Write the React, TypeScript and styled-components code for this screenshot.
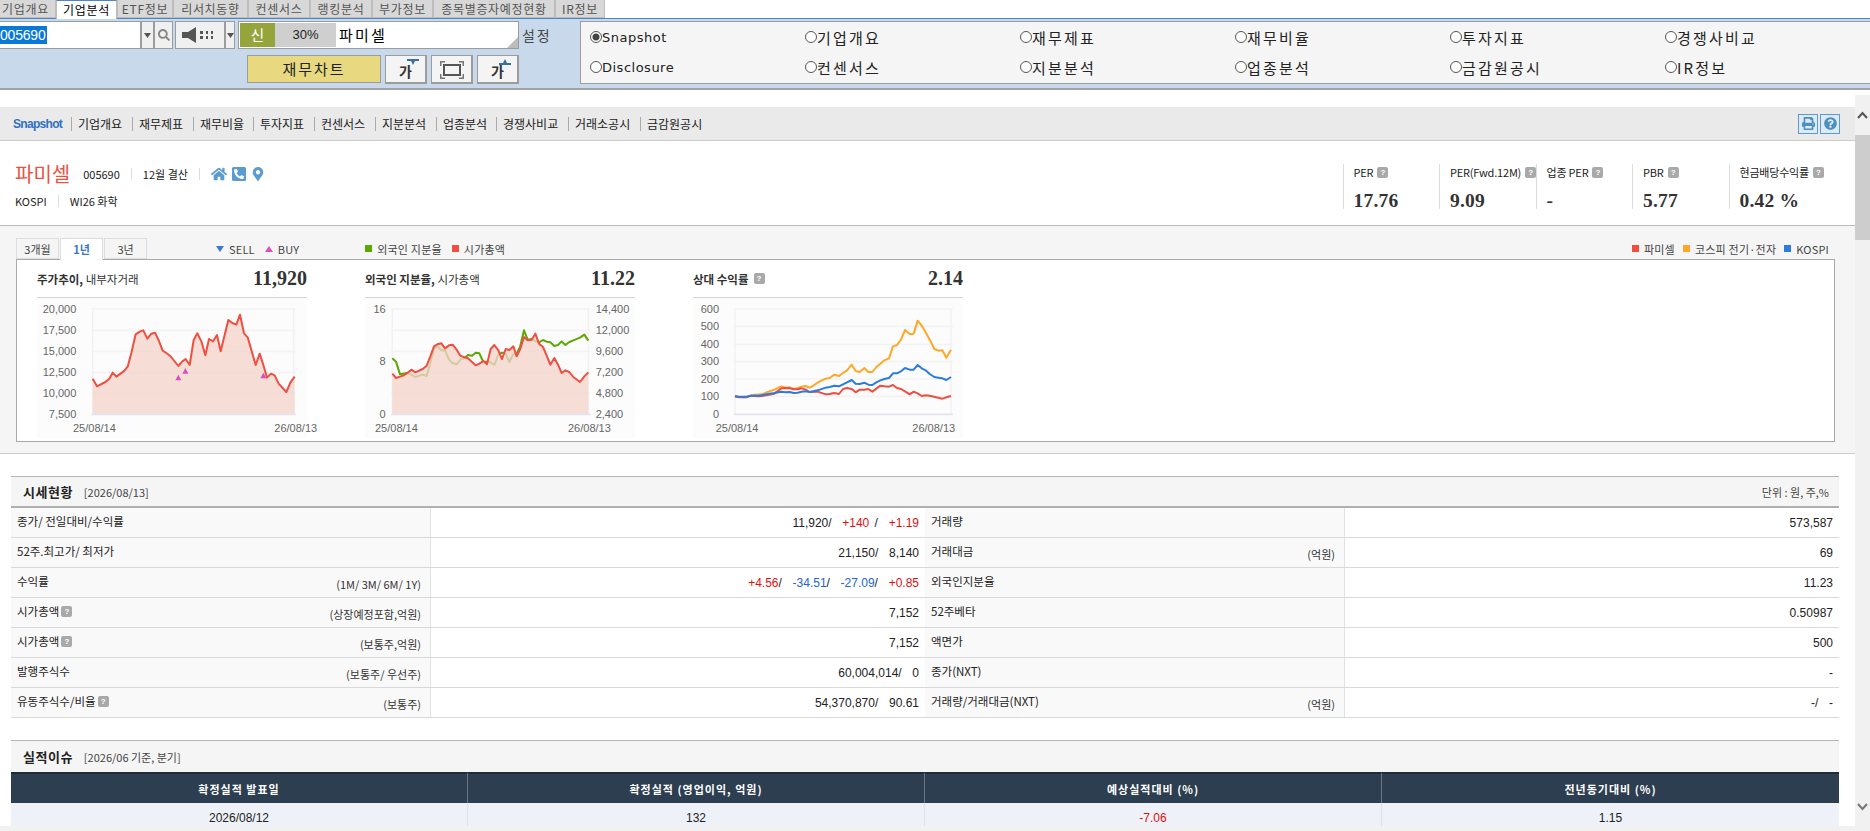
import React from "react";
import styled, { createGlobalStyle } from "styled-components";
import { FaHome, FaMapMarkerAlt, FaPhoneSquareAlt, FaPrint, FaQuestionCircle, FaSearch } from "react-icons/fa";

const FONT = `"Liberation Sans", "Noto Sans CJK KR", sans-serif`;
const KR = `"Noto Sans CJK KR", "Liberation Sans", sans-serif`;

const GlobalStyle = createGlobalStyle`
  html, body { margin: 0; padding: 0; background: #fff; overflow: hidden; }
  * { box-sizing: border-box; }
`;

const Root = styled.div`
  width: 1870px;
  height: 831px;
  display: flex;
  flex-direction: column;
  overflow: hidden;
  font-family: ${FONT};
  font-size: 12px;
  color: #333;
`;

/* top tabs */
const TabBar = styled.div`
  display: flex;
  height: 19px;
  border-bottom: 1px solid #4a86c5;
  margin-left: -5px;
  flex: none;
`;
const Tab = styled.div<{ $w: number; $active?: boolean }>`
  width: ${(p) => p.$w}px;
  height: ${(p) => (p.$active ? 19 : 18)}px;
  background: ${(p) => (p.$active ? "#fff" : "#d8d8d8")};
  border: 1px solid #bdbdbd;
  border-bottom: ${(p) => (p.$active ? "none" : "1px solid #bdbdbd")};
  border-top: ${(p) => (p.$active ? "1px solid #4a86c5" : "none")};
  font: 12px/17px ${KR};
  letter-spacing: 0.7px;
  text-align: center;
  color: ${(p) => (p.$active ? "#000" : "#555")};
  white-space: nowrap;
`;

/* toolbar */
const Toolbar = styled.div`
  flex: none;
  height: 71px;
  display: flex;
  background: #c9d9ec;
  border-bottom: 2px solid #a3a3a3;
  padding: 2px 2px 0 0;
`;
const ToolLeft = styled.div`
  width: 580px;
  flex: none;
`;
const ToolRow = styled.div`
  display: flex;
  align-items: center;
  height: 28px;
`;
const ToolRowEnd = styled(ToolRow)`
  margin-top: 6px;
  padding-left: 247px;
  gap: 4px;
`;
const CodeInput = styled.div`
  width: 141px;
  height: 28px;
  background: #fff;
  border: 1px solid #9c9c9c;
  border-left: none;
  display: flex;
  align-items: center;
  font: 14px ${FONT};
  letter-spacing: -0.2px;
`;
const Selected = styled.span`
  background: #0a78d7;
  color: #fff;
  line-height: 18px;
  padding-right: 1px;
`;
const SmallBtn = styled.div<{ $w: number; $ml?: number }>`
  width: ${(p) => p.$w}px;
  margin-left: ${(p) => p.$ml ?? 0}px;
  height: 28px;
  flex: none;
  background: #f0f0f0;
  border: 1px solid #9c9c9c;
  display: flex;
  align-items: center;
  justify-content: center;
  color: #555;
`;
const NameField = styled.div`
  position: relative;
  width: 281px;
  height: 28px;
  margin-left: 3px;
  flex: none;
  background: #fff;
  border: 1px solid #9c9c9c;
  display: flex;
  padding: 1px;
`;
const ShinTag = styled.div`
  width: 35px;
  background: #95a43b;
  color: #fff;
  font: 15px/24px ${KR};
  text-align: center;
`;
const RateTag = styled.div`
  width: 61px;
  background: #cfcfcf;
  font: 13px/24px ${FONT};
  text-align: center;
  color: #222;
`;
const StockName = styled.div`
  margin-left: 3px;
  font: 15px/24px ${KR};
  letter-spacing: 2.2px;
  color: #000;
`;
const Corner = styled.span`
  position: absolute;
  right: 0;
  bottom: 0;
  border-style: solid;
  border-width: 0 0 11px 11px;
  border-color: transparent transparent #bcbcbc transparent;
`;
const SettingLabel = styled.div`
  margin-left: 3px;
  font: 14px ${KR};
  letter-spacing: 1.8px;
  color: #444;
`;
const ChartBtn = styled.div`
  width: 134px;
  height: 28px;
  background: #e8d880;
  border: 1px solid #9c9c9c;
  text-align: center;
  font: 15px/26px ${KR};
  letter-spacing: 2px;
  color: #222;
`;
const GaBtn = styled.div`
  position: relative;
  width: 42px;
  height: 29px;
  background: #f4f4f4;
  border: 1px solid #9c9c9c;
  border-right-width: 2px;
  border-bottom-width: 2px;
  display: flex;
  align-items: flex-end;
  justify-content: center;
  font: bold 14px/22px ${KR};
  color: #333;
`;
const GaMark = styled.svg`
  position: absolute;
  top: 3px;
  right: 6px;
`;
const ExpandIcon = styled.svg`
  margin-bottom: 3px;
`;

const RadioPanel = styled.div`
  flex: 1;
  height: 63px;
  background: #f5f5f5;
  border: 1px solid #9c9c9c;
  display: grid;
  grid-template-columns: repeat(6, 215px);
  grid-auto-rows: 30px;
  align-items: center;
  padding: 0 0 0 9px;
`;
const RadioItem = styled.div`
  display: flex;
  align-items: center;
  font: 15px ${KR};
  letter-spacing: 2.2px;
  color: #222;
`;
const RadioLatin = styled(RadioItem)`
  font-family: "DejaVu Sans", sans-serif;
  font-size: 13px;
  letter-spacing: 0.5px;
`;
const RadioDot = styled.span<{ $on?: boolean }>`
  width: 12px;
  height: 12px;
  flex: none;
  border: 1px solid #555;
  border-radius: 50%;
  background: ${(p) => (p.$on ? "radial-gradient(circle, #444 0 3px, #fff 4px)" : "#fff")};
`;

/* page body */
const Body = styled.div`
  flex: 1;
  min-height: 0;
  display: flex;
`;
const Page = styled.div`
  flex: 1;
  min-width: 0;
  padding-top: 17px;
  overflow: hidden;
  background: #fff;
`;
const Scrollbar = styled.div`
  width: 15px;
  flex: none;
  margin-top: 5px;
  background: #f1f1f1;
  display: flex;
  flex-direction: column;
  align-items: center;
`;
const ScrollArrow = styled.svg`
  flex: none;
`;
const ScrollThumb = styled.div`
  width: 100%;
  height: 105px;
  background: #cdcdcd;
  margin-top: 8px;
`;
const ScrollSpacer = styled.div`
  flex: 1;
`;
const BottomStrip = styled.div`
  flex: none;
  height: 5px;
  background: #f1f1f1;
`;

/* nav */
const Nav = styled.div`
  height: 34px;
  background: #eaeaea;
  border-bottom: 1px solid #ccc;
  display: flex;
  align-items: center;
  padding: 0 15px 0 13px;
`;
const NavSnapshot = styled.a`
  font: bold 12px ${FONT};
  letter-spacing: -0.7px;
  color: #2f6fc4;
  width: 58px;
  flex: none;
`;
const NavItem = styled.a<{ $w: number }>`
  width: ${(p) => p.$w}px;
  border-left: 1px solid #aaa;
  height: 14px;
  padding: 0 0 0 6px;
  font: 12px/14px ${KR};
  color: #222;
  white-space: nowrap;
  flex: none;
`;
const NavTools = styled.div`
  margin-left: auto;
  display: flex;
  gap: 2px;
`;
const NavIcon = styled.div`
  width: 20px;
  height: 20px;
  border: 1px solid #5a9bd0;
  background: #dcebf7;
  color: #4d8fc0;
  display: flex;
  align-items: center;
  justify-content: center;
`;

/* company header */
const Company = styled.div`
  height: 85px;
  display: flex;
  justify-content: space-between;
  border-bottom: 1px solid #bbb;
  padding: 23px 30px 0 15px;
`;
const CompanyInfo = styled.div`
  display: flex;
  flex-direction: column;
  gap: 9px;
`;
const InfoLine = styled.div`
  display: flex;
  align-items: center;
  font: 11px ${KR};
  color: #222;
`;
const CompanyName = styled.span`
  font: 20px/20px ${KR};
  color: #e8533f;
  margin-right: 13px;
`;
const InfoSep = styled.span`
  width: 1px;
  height: 12px;
  background: #ddd;
  margin: 0 11px;
`;
const InfoIcons = styled.span`
  display: flex;
  align-items: center;
  gap: 4px;
  color: #5a9bd0;
`;
const Metrics = styled.div`
  display: flex;
`;
const Metric = styled.div`
  width: 96.5px;
  height: 45px;
  border-left: 1px solid #ddd;
  padding-left: 10px;
`;
const MetricLabel = styled.div`
  font: 11px/16px ${KR};
  letter-spacing: -0.2px;
  color: #222;
  white-space: nowrap;
  display: flex;
  align-items: center;
  gap: 4px;
`;
const MetricValue = styled.div`
  margin-top: 12px;
  font: bold 19.5px/18px "Liberation Serif", serif;
  letter-spacing: 0.2px;
  color: #333;
`;
const Help = styled.span`
  display: inline-block;
  width: 11px;
  height: 11px;
  flex: none;
  border-radius: 2px;
  background: #a9a9a9;
  color: #fff;
  font: bold 8px/11px ${FONT};
  text-align: center;
`;

/* graphs */
const GraphArea = styled.div`
  height: 228px;
  background: #f5f5f5;
  border-bottom: 1px solid #ccc;
  padding: 11px 20px 0 16px;
`;
const GraphTop = styled.div`
  height: 22px;
  display: flex;
  align-items: flex-end;
`;
const RangeTab = styled.div<{ $active?: boolean }>`
  width: 43px;
  height: ${(p) => (p.$active ? 22 : 21)}px;
  margin-right: 1px;
  margin-bottom: ${(p) => (p.$active ? -1 : 0)}px;
  position: relative;
  background: ${(p) => (p.$active ? "#fff" : "#f5f5f5")};
  border: 1px solid #ddd;
  border-bottom: ${(p) => (p.$active ? "none" : "1px solid #ddd")};
  font: ${(p) => (p.$active ? "bold " : "")}11px/20px ${KR};
  color: ${(p) => (p.$active ? "#3a78c4" : "#444")};
  text-align: center;
`;
const LegendGroup = styled.div<{ $ml?: number }>`
  margin-left: ${(p) => (p.$ml === undefined ? "auto" : `${p.$ml}px`)};
  display: flex;
  align-items: center;
  height: 21px;
  gap: 10px;
`;
const PeerLegend = styled(LegendGroup)`
  gap: 8px;
  padding-right: 6px;
`;
const LegendItem = styled.span`
  display: flex;
  align-items: center;
  gap: 5px;
  font: 11px ${KR};
  letter-spacing: 0.2px;
  color: #444;
  white-space: nowrap;
`;
const Swatch = styled.i<{ $c: string }>`
  width: 7px;
  height: 7px;
  background: ${(p) => p.$c};
`;
const Marker = styled.i<{ $c: string; $up?: boolean }>`
  width: 0;
  height: 0;
  border-left: 4px solid transparent;
  border-right: 4px solid transparent;
  ${(p) => (p.$up ? `border-bottom: 6px solid ${p.$c};` : `border-top: 6px solid ${p.$c};`)}
`;
const GraphBox = styled.div`
  height: 183px;
  background: #fff;
  border: 1px solid #aaa;
  display: flex;
  gap: 58px;
  padding-left: 20px;
`;
const ChartCard = styled.div`
  width: 270px;
  flex: none;
`;
const ChartTitle = styled.div`
  height: 38px;
  border-bottom: 1px solid #d4d4d4;
  display: flex;
  justify-content: space-between;
  align-items: center;
  font: 11.5px ${KR};
  color: #333;
`;
const ChartTitleText = styled.span`
  display: flex;
  align-items: center;
  gap: 5px;
  b { font-weight: 700; }
`;
const ChartValue = styled.span`
  font: bold 20px "Liberation Serif", serif;
  color: #333;
`;
const ChartSvg = styled.svg`
  display: block;
  overflow: visible;
  background: #fcfcfc;
`;

/* tables */
const Section = styled.div<{ $mt: number }>`
  margin: ${(p) => p.$mt}px 16px 0 11px;
`;
const SectionHead = styled.div<{ $h: number }>`
  height: ${(p) => p.$h}px;
  border-top: 1px solid #b5b5b5;
  background: #f5f5f5;
  display: flex;
  align-items: center;
  padding: 0 10px 0 12px;
  font: 11px ${KR};
  color: #444;
`;
const SectionTitle = styled.b`
  font: bold 13px ${KR};
  letter-spacing: 0.5px;
  color: #222;
  margin-right: 11px;
`;
const SectionUnit = styled.span`
  margin-left: auto;
`;
const PriceTable = styled.table`
  width: 100%;
  border-collapse: separate;
  border-spacing: 0;
  table-layout: fixed;
  border-top: 2px solid #b0b0b0;
  font: 12px ${FONT};
  col:nth-child(odd) { width: 420px; }
  col:nth-child(even) { width: 494px; }
  td, th { height: 30px; padding: 0 6px; border-bottom: 1px solid #d9d9d9; font-weight: 400; }
`;
const LabelCell = styled.th`
  background: #f9f9f9;
  border-right: 1px solid #e2e2e2;
  text-align: left;
`;
const LabelInner = styled.div`
  display: flex;
  justify-content: space-between;
  padding-right: 3px;
  font: 11.5px/14px ${KR};
  color: #222;
`;
const LabelText = styled.span`
  display: flex;
  align-items: center;
  gap: 2px;
  margin-top: -3px;
`;
const Unit = styled.span`
  font-size: 11px;
  margin-top: 3px;
  color: #333;
`;
const ValueCell = styled.td`
  text-align: right;
  color: #222;
  white-space: pre;
  word-spacing: 2px;
`;
const Tone = styled.span<{ $c: string }>`
  color: ${(p) => p.$c};
`;
const IssueTable = styled.table`
  width: 100%;
  border-collapse: separate;
  border-spacing: 0;
  table-layout: fixed;
  th {
    height: 31px;
    background: #2c3e50;
    border-top: 2px solid #1e2c3a;
    border-right: 1px solid #6b7886;
    color: #fff;
    font: bold 11px ${KR};
    letter-spacing: 1px;
  }
  th:last-child { border-right: 0; }
  td {
    height: 30px;
    background: #eef2f8;
    border-right: 1px solid #dbe0e6;
    text-align: center;
    font: 12px ${FONT};
    color: #222;
  }
  td:last-child { border-right: 0; }
`;

const TABS: [string, number][] = [
  ["기업개요", 61], ["기업분석", 61], ["ETF정보", 56], ["리서치동향", 75], ["컨센서스", 62],
  ["랭킹분석", 62], ["부가정보", 61], ["종목별증자예정현황", 122], ["IR정보", 50],
];
const RADIOS = ["Snapshot", "기업개요", "재무제표", "재무비율", "투자지표", "경쟁사비교",
  "Disclosure", "컨센서스", "지분분석", "업종분석", "금감원공시", "IR정보"];
const NAV: [string, number][] = [
  ["기업개요", 61], ["재무제표", 61], ["재무비율", 60], ["투자지표", 61], ["컨센서스", 61],
  ["지분분석", 61], ["업종분석", 60], ["경쟁사비교", 72], ["거래소공시", 72], ["금감원공시", 72],
];

const METRICS = [
  { label: "PER", value: "17.76" },
  { label: "PER(Fwd.12M)", value: "9.09" },
  { label: "업종 PER", value: "-" },
  { label: "PBR", value: "5.77" },
  { label: "현금배당수익률", value: "0.42 %" },
];

const RED = "#f04e40";
const GREEN = "#5aa800";
const ORANGE = "#ffa726";
const BLUE = "#2b7be0";
const UP = "#e01010";
const DOWN = "#1a66d8";
const AXIS = { fill: "#666", fontSize: 33, fontFamily: FONT };

const PRICE = "247,357 260,380 285,367 297,357 307,339 318,351 340,335 352,321 363,280 376,224 388,216 399,212 411,237 423,222 434,219 446,244 457,273 468,280 480,289 504,319 516,305 526,298 538,316 550,241 561,221 573,245 585,287 596,238 608,245 620,226 631,275 654,181 666,190 678,195 689,165 701,221 712,233 736,316 748,282 760,319 770,354 782,342 793,347 805,372 828,397 840,369 853,351";
const FOREIGN = "127,296 138,306 150,344 172,340 184,345 196,352 218,345 230,349 241,310 252,268 262,259 274,272 285,272 297,300 308,311 320,314 331,300 343,295 354,286 366,288 377,279 388,281 400,307 411,306 422,308 433,316 445,285 456,279 467,283 478,307 490,284 500,282 510,262 522,212 533,240 545,238 556,245 567,248 579,241 590,246 601,248 613,259 624,256 635,245 646,256 658,247 670,242 690,234 703,225 715,243";
const MARKET = "127,342 138,355 150,351 161,347 172,340 184,330 196,338 218,328 230,318 241,290 252,260 262,254 274,251 285,266 297,257 308,255 320,270 331,288 343,293 354,296 366,307 377,317 388,312 400,304 411,314 422,268 433,256 445,272 456,298 467,268 478,271 490,260 500,290 510,270 522,232 533,242 545,240 556,222 567,252 579,262 590,288 601,315 613,295 624,315 635,340 646,332 658,337 670,352 690,367 703,350 715,338";
const REL_ORANGE = "198,410 210,412 232,413 245,408 257,405 280,404 292,398 304,394 316,390 337,380 350,384 362,383 374,388 386,385 398,381 410,379 422,384 434,377 446,369 458,362 470,357 482,355 496,345 510,349 522,340 534,332 548,315 560,334 572,337 586,325 598,337 610,337 622,322 634,312 646,302 660,296 672,260 684,256 696,240 708,211 722,223 734,222 746,183 758,198 770,218 782,240 796,268 808,273 820,272 832,294 846,270";
const REL_BLUE = "198,410 210,411 232,411 245,408 270,408 292,404 316,400 337,396 350,398 362,397 374,400 386,399 398,396 410,395 422,397 446,392 470,384 482,382 496,378 510,380 522,374 534,368 548,361 560,372 572,373 586,369 598,375 610,376 622,368 634,362 646,358 660,355 672,341 684,341 696,335 708,325 722,330 734,330 746,316 758,326 770,332 782,343 796,352 808,354 820,356 832,361 846,352";
const REL_RED = "198,410 210,413 232,413 245,408 270,410 292,407 316,402 337,386 350,385 362,386 374,389 386,389 398,386 410,390 422,397 446,396 470,404 482,403 496,400 510,403 522,388 534,385 548,388 560,398 572,390 586,390 598,388 610,396 634,378 646,380 660,381 672,376 684,385 696,388 708,395 722,404 734,396 746,401 758,409 770,407 782,408 808,414 820,417 832,413 846,409";

type PlotProps = {
  viewX: number;
  left: number;
  right: number;
  yLabels: [string, number][];
  labelX: number;
  rightLabels?: [string, number][];
  xLabels: [number, number];
  children: React.ReactNode;
};

// coordinates are the 3x scale of the page, the box is 270x140
const Plot = ({ viewX, left, right, yLabels, labelX, rightLabels, xLabels, children }: PlotProps) => {
  const lines = (rightLabels ?? yLabels).slice(0, -1).map((l) => l[1]);
  return (
    <ChartSvg width="270" height="140" viewBox={`${viewX} 115 810 420`}>
      {lines.map((y) => (
        <line key={y} x1={left - 4} x2={right + 6} y1={y} y2={y} stroke="#f3f3f3" strokeWidth="5" />
      ))}
      <line x1={left} x2={left} y1="148" y2="464" stroke="#f1f1f5" strokeWidth="4" />
      <line x1={right} x2={right} y1="148" y2="464" stroke="#f1f1f5" strokeWidth="4" />
      {children}
      <line x1={left - 4} x2={right + 6} y1="464" y2="464" stroke="#e3e3ee" strokeWidth="5" />
      {yLabels.map(([t, y]) => (
        <text key={t} x={labelX} y={y + 11} textAnchor="end" {...AXIS}>{t}</text>
      ))}
      {rightLabels?.map(([t, y]) => (
        <text key={t} x={right + 22} y={y + 11} {...AXIS}>{t}</text>
      ))}
      <text x={xLabels[0]} y="516" {...AXIS}>25/08/14</text>
      <text x={xLabels[1]} y="516" {...AXIS}>26/08/13</text>
    </ChartSvg>
  );
};

const Line = ({ points, color }: { points: string; color: string }) => (
  <polyline points={points} fill="none" stroke={color} strokeWidth="6" strokeLinejoin="round" />
);

const Area = ({ points, left, right }: { points: string; left: number; right: number }) => (
  <polygon points={`${left},464 ${points} ${right},464`} fill="#f3d5cc" fillOpacity="0.78" />
);

const Triangle = ({ x, y }: { x: number; y: number }) => (
  <polygon points={`${x},${y - 9} ${x + 9},${y + 8} ${x - 9},${y + 8}`} fill="#d84fc4" />
);

const DownCaret = () => (
  <svg width="7" height="5"><path d="M0 0h7L3.500 5z" fill="#555" /></svg>
);

const HelpMark = () => <Help>?</Help>;

const Label = ({ text, unit, help }: { text: string; unit?: string; help?: boolean }) => (
  <LabelCell>
    <LabelInner>
      <LabelText>{text}{help && <HelpMark />}</LabelText>
      {unit && <Unit>{unit}</Unit>}
    </LabelInner>
  </LabelCell>
);

export default function App() {
  return (
    <Root>
      <GlobalStyle />
      <TabBar>
        {TABS.map(([name, w], i) => (
          <Tab key={name} $w={w} $active={i === 1}>{name}</Tab>
        ))}
      </TabBar>

      <Toolbar>
        <ToolLeft>
          <ToolRow>
            <CodeInput><Selected>005690</Selected></CodeInput>
            <SmallBtn $w={13}><DownCaret /></SmallBtn>
            <SmallBtn $w={19}><FaSearch size={12} color="#888" /></SmallBtn>
            <SmallBtn $w={50} $ml={2}>
              <svg width="36" height="16" viewBox="0 0 36 16">
                <path d="M0 5h6l8-5v16l-8-5H0z" fill="#555" />
                <path d="M18 4h3v3h-3zM18 9h3v3h-3zM24 4h2v3h-2zM24 9h2v3h-2zM29 4h2v3h-2zM29 9h2v3h-2z" fill="#555" />
              </svg>
            </SmallBtn>
            <SmallBtn $w={10}><DownCaret /></SmallBtn>
            <NameField>
              <ShinTag>신</ShinTag>
              <RateTag>30%</RateTag>
              <StockName>파미셀</StockName>
              <Corner />
            </NameField>
            <SettingLabel>설정</SettingLabel>
          </ToolRow>
          <ToolRowEnd>
            <ChartBtn>재무차트</ChartBtn>
            <GaBtn>
              가
              <GaMark width="12" height="6"><path d="M0 0h12v2H8L6 6 4 2H0z" fill="#3a6ea5" /></GaMark>
            </GaBtn>
            <GaBtn>
              <ExpandIcon width="24" height="18" viewBox="0 0 24 18">
                <path d="M4 4h16v10H4z" fill="none" stroke="#555" strokeWidth="2" />
                <path d="M0 0h5v1.500H1.500V5H0zM24 0h-5v1.500h3.500V5H24zM0 18h5v-1.500H1.500V13H0zM24 18h-5v-1.500h3.500V13H24z" fill="#777" />
              </ExpandIcon>
            </GaBtn>
            <GaBtn>
              가
              <GaMark width="12" height="6"><path d="M6 0l2 4h4v2H0V4h4z" fill="#3a6ea5" /></GaMark>
            </GaBtn>
          </ToolRowEnd>
        </ToolLeft>
        <RadioPanel>
          {RADIOS.map((r, i) => {
            const Item = /^[A-Z][a-z]/.test(r) ? RadioLatin : RadioItem;
            return (
              <Item key={r}>
                <RadioDot $on={i === 0} />
                {r}
              </Item>
            );
          })}
        </RadioPanel>
      </Toolbar>

      <Body>
        <Page>
          <Nav>
            <NavSnapshot>Snapshot</NavSnapshot>
            {NAV.map(([n, w]) => (
              <NavItem key={n} $w={w}>{n}</NavItem>
            ))}
            <NavTools>
              <NavIcon><FaPrint size={13} /></NavIcon>
              <NavIcon><FaQuestionCircle size={13} /></NavIcon>
            </NavTools>
          </Nav>

          <Company>
            <CompanyInfo>
              <InfoLine>
                <CompanyName>파미셀</CompanyName>
                005690
                <InfoSep />
                12월 결산
                <InfoSep />
                <InfoIcons>
                  <FaHome size={16} />
                  <FaPhoneSquareAlt size={16} />
                  <FaMapMarkerAlt size={14} />
                </InfoIcons>
              </InfoLine>
              <InfoLine>
                KOSPI
                <InfoSep />
                WI26 화학
              </InfoLine>
            </CompanyInfo>
            <Metrics>
              {METRICS.map((m) => (
                <Metric key={m.label}>
                  <MetricLabel>{m.label} <HelpMark /></MetricLabel>
                  <MetricValue>{m.value}</MetricValue>
                </Metric>
              ))}
            </Metrics>
          </Company>

          <GraphArea>
            <GraphTop>
              <RangeTab>3개월</RangeTab>
              <RangeTab $active>1년</RangeTab>
              <RangeTab>3년</RangeTab>
              <LegendGroup $ml={68}>
                <LegendItem><Marker $c="#3a78d4" />SELL</LegendItem>
                <LegendItem><Marker $c="#d84fc4" $up />BUY</LegendItem>
              </LegendGroup>
              <LegendGroup $ml={66}>
                <LegendItem><Swatch $c={GREEN} />외국인 지분율</LegendItem>
                <LegendItem><Swatch $c={RED} />시가총액</LegendItem>
              </LegendGroup>
              <PeerLegend>
                <LegendItem><Swatch $c={RED} />파미셀</LegendItem>
                <LegendItem><Swatch $c={ORANGE} />코스피 전기·전자</LegendItem>
                <LegendItem><Swatch $c={BLUE} />KOSPI</LegendItem>
              </PeerLegend>
            </GraphTop>
            <GraphBox>
              <ChartCard>
                <ChartTitle>
                  <ChartTitleText><span><b>주가추이,</b> 내부자거래</span></ChartTitleText>
                  <ChartValue>11,920</ChartValue>
                </ChartTitle>
                <Plot
                  viewX={80}
                  left={247}
                  right={850}
                  labelX={198}
                  xLabels={[188, 792]}
                  yLabels={[["20,000", 148], ["17,500", 212], ["15,000", 275], ["12,500", 338], ["10,000", 401], ["7,500", 464]]}
                >
                  <Area points={PRICE} left={247} right={853} />
                  <Line points={PRICE} color={RED} />
                  <Triangle x={504} y={354} />
                  <Triangle x={525} y={334} />
                  <Triangle x={759} y={348} />
                </Plot>
              </ChartCard>

              <ChartCard>
                <ChartTitle>
                  <ChartTitleText><span><b>외국인 지분율,</b> 시가총액</span></ChartTitleText>
                  <ChartValue>11.22</ChartValue>
                </ChartTitle>
                <Plot
                  viewX={45}
                  left={127}
                  right={715}
                  labelX={107}
                  xLabels={[75, 654]}
                  yLabels={[["16", 148], ["8", 304], ["0", 464]]}
                  rightLabels={[["14,400", 148], ["12,000", 212], ["9,600", 275], ["7,200", 338], ["4,800", 401], ["2,400", 464]]}
                >
                  <Line points={FOREIGN} color={GREEN} />
                  <Area points={MARKET} left={127} right={715} />
                  <Line points={MARKET} color={RED} />
                </Plot>
              </ChartCard>

              <ChartCard>
                <ChartTitle>
                  <ChartTitleText><b>상대 수익률</b> <HelpMark /></ChartTitleText>
                  <ChartValue>2.14</ChartValue>
                </ChartTitle>
                <Plot
                  viewX={72}
                  left={198}
                  right={846}
                  labelX={150}
                  xLabels={[140, 730]}
                  yLabels={[["600", 148], ["500", 200], ["400", 254], ["300", 306], ["200", 358], ["100", 410], ["0", 464]]}
                >
                  <Line points={REL_ORANGE} color={ORANGE} />
                  <Line points={REL_RED} color={RED} />
                  <Line points={REL_BLUE} color={BLUE} />
                </Plot>
              </ChartCard>
            </GraphBox>
          </GraphArea>

          <Section $mt={22}>
            <SectionHead $h={30}>
              <SectionTitle>시세현황</SectionTitle>
              [2026/08/13]
              <SectionUnit>단위 : 원, 주,%</SectionUnit>
            </SectionHead>
            <PriceTable>
              <colgroup><col /><col /><col /><col /></colgroup>
              <tbody>
                <tr>
                  <Label text="종가/ 전일대비/수익률" />
                  <ValueCell>11,920/  <Tone $c={UP}>+140</Tone> /  <Tone $c={UP}>+1.19</Tone></ValueCell>
                  <Label text="거래량" />
                  <ValueCell>573,587</ValueCell>
                </tr>
                <tr>
                  <Label text="52주.최고가/ 최저가" />
                  <ValueCell>21,150/  8,140</ValueCell>
                  <Label text="거래대금" unit="(억원)" />
                  <ValueCell>69</ValueCell>
                </tr>
                <tr>
                  <Label text="수익률" unit="(1M/ 3M/ 6M/ 1Y)" />
                  <ValueCell>
                    <Tone $c={UP}>+4.56</Tone>/  <Tone $c={DOWN}>-34.51</Tone>/  <Tone $c={DOWN}>-27.09</Tone>/  <Tone $c={UP}>+0.85</Tone>
                  </ValueCell>
                  <Label text="외국인지분율" />
                  <ValueCell>11.23</ValueCell>
                </tr>
                <tr>
                  <Label text="시가총액" help unit="(상장예정포함,억원)" />
                  <ValueCell>7,152</ValueCell>
                  <Label text="52주베타" />
                  <ValueCell>0.50987</ValueCell>
                </tr>
                <tr>
                  <Label text="시가총액" help unit="(보통주,억원)" />
                  <ValueCell>7,152</ValueCell>
                  <Label text="액면가" />
                  <ValueCell>500</ValueCell>
                </tr>
                <tr>
                  <Label text="발행주식수" unit="(보통주/ 우선주)" />
                  <ValueCell>60,004,014/  0</ValueCell>
                  <Label text="종가(NXT)" />
                  <ValueCell>-</ValueCell>
                </tr>
                <tr>
                  <Label text="유동주식수/비율" help unit="(보통주)" />
                  <ValueCell>54,370,870/  90.61</ValueCell>
                  <Label text="거래량/거래대금(NXT)" unit="(억원)" />
                  <ValueCell>-/  -</ValueCell>
                </tr>
              </tbody>
            </PriceTable>
          </Section>

          <Section $mt={22}>
            <SectionHead $h={32}>
              <SectionTitle>실적이슈</SectionTitle>
              [2026/06 기준, 분기]
            </SectionHead>
            <IssueTable>
              <thead>
                <tr>
                  <th>확정실적 발표일</th>
                  <th>확정실적 (영업이익, 억원)</th>
                  <th>예상실적대비 (%)</th>
                  <th>전년동기대비 (%)</th>
                </tr>
              </thead>
              <tbody>
                <tr>
                  <td>2026/08/12</td>
                  <td>132</td>
                  <td><Tone $c={UP}>-7.06</Tone></td>
                  <td>1.15</td>
                </tr>
              </tbody>
            </IssueTable>
          </Section>
        </Page>
        <Scrollbar>
          <ScrollArrow width="13" height="32" viewBox="0 0 13 32">
            <path d="M2 23l4.500-5 4.500 5" fill="none" stroke="#555" strokeWidth="2" />
          </ScrollArrow>
          <ScrollThumb />
          <ScrollSpacer />
          <ScrollArrow width="13" height="24" viewBox="0 0 13 24">
            <path d="M2 2l4.500 5L11 2" fill="none" stroke="#777" strokeWidth="2" />
          </ScrollArrow>
        </Scrollbar>
      </Body>
      <BottomStrip />
    </Root>
  );
}
